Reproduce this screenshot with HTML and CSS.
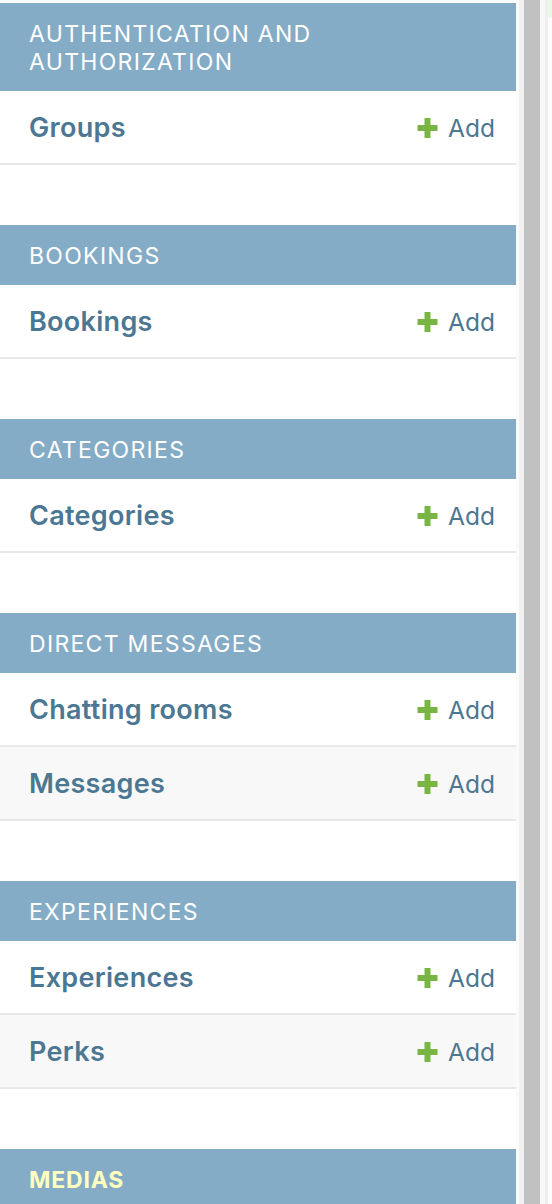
FILE: index.html
```html
<!DOCTYPE html>
<html lang="en">
<head>
<meta charset="utf-8">
<title>Site administration</title>
<link rel="stylesheet" href="styles.css">
</head>
<body>
<div class="layout">
  <nav class="sidebar">
    <div class="module">
      <div class="caption">Authentication and Authorization</div>
      <div class="row"><a class="model" href="#">Groups</a><a class="addlink" href="#"><svg class="plus" viewBox="0 0 20 20"><path d="M7 0h6v7h7v6h-7v7H7v-7H0V7h7z"/></svg>Add</a></div>
    </div>
    <div class="module">
      <div class="caption">Bookings</div>
      <div class="row"><a class="model" href="#">Bookings</a><a class="addlink" href="#"><svg class="plus" viewBox="0 0 20 20"><path d="M7 0h6v7h7v6h-7v7H7v-7H0V7h7z"/></svg>Add</a></div>
    </div>
    <div class="module">
      <div class="caption">Categories</div>
      <div class="row"><a class="model" href="#">Categories</a><a class="addlink" href="#"><svg class="plus" viewBox="0 0 20 20"><path d="M7 0h6v7h7v6h-7v7H7v-7H0V7h7z"/></svg>Add</a></div>
    </div>
    <div class="module">
      <div class="caption">Direct Messages</div>
      <div class="row"><a class="model" href="#">Chatting rooms</a><a class="addlink" href="#"><svg class="plus" viewBox="0 0 20 20"><path d="M7 0h6v7h7v6h-7v7H7v-7H0V7h7z"/></svg>Add</a></div>
      <div class="row alt"><a class="model" href="#">Messages</a><a class="addlink" href="#"><svg class="plus" viewBox="0 0 20 20"><path d="M7 0h6v7h7v6h-7v7H7v-7H0V7h7z"/></svg>Add</a></div>
    </div>
    <div class="module">
      <div class="caption">Experiences</div>
      <div class="row"><a class="model" href="#">Experiences</a><a class="addlink" href="#"><svg class="plus" viewBox="0 0 20 20"><path d="M7 0h6v7h7v6h-7v7H7v-7H0V7h7z"/></svg>Add</a></div>
      <div class="row alt"><a class="model" href="#">Perks</a><a class="addlink" href="#"><svg class="plus" viewBox="0 0 20 20"><path d="M7 0h6v7h7v6h-7v7H7v-7H0V7h7z"/></svg>Add</a></div>
    </div>
    <div class="module">
      <div class="caption current">Medias</div>
    </div>
  </nav>
  <div class="gutter">
    <div class="g1"></div>
    <div class="g2"></div>
    <div class="thumb"></div>
    <div class="g3"></div>
    <div class="g4"></div>
    <div class="g5"><div class="tint"></div></div>
  </div>
</div>
</body>
</html>
```
FILE: styles.css
```css
html, body {
  margin: 0;
  padding: 0;
  background: #ffffff;
  height: 1204px;
  overflow: hidden;
}

body {
  font-family: Inter, "Noto Sans", "Liberation Sans", sans-serif;
}

.layout {
  display: flex;
  height: 1204px;
}

.sidebar {
  width: 516px;
  flex: none;
  padding-top: 3px;
  display: flex;
  flex-direction: column;
  gap: 60px;
}

.module {
  display: flex;
  flex-direction: column;
}

.caption {
  background: #84acc6;
  color: #ffffff;
  font-size: 23px;
  line-height: 28px;
  letter-spacing: 1.3px;
  text-transform: uppercase;
  padding: 17px 29px 15px 29px;
  font-weight: 400;
}

.caption.current {
  color: #ffffc0;
  font-weight: 700;
  letter-spacing: 0.8px;
}

.row {
  height: 72px;
  border-bottom: 2px solid #e8e8e8;
  display: flex;
  align-items: center;
  justify-content: space-between;
  padding: 0 21px 0 29px;
  background: #ffffff;
}

.row.alt {
  background: #f8f8f8;
}

.model {
  color: #4b7793;
  font-weight: 600;
  font-size: 27px;
  letter-spacing: 0.3px;
  text-decoration: none;
}

.addlink {
  color: #4b7793;
  font-size: 24.5px;
  text-decoration: none;
  display: flex;
  align-items: center;
  gap: 10px;
  padding-top: 2px;
}

.plus {
  width: 21px;
  height: 20px;
  fill: #79b543;
}

.gutter {
  flex: 1;
  display: flex;
  height: 1204px;
}

.g1 { width: 3px; background: #fafafa; }
.g2 { width: 5px; background: #f2f2f2; }
.thumb { width: 16px; background: #c1c1c1; }
.g3 { width: 5px; background: #f8f8f8; }
.g4 { width: 3px; background: #eeeeee; }
.g5 { flex: 1; background: #ffffff; }
.tint { height: 18px; background: #e6fbe6; }
```
